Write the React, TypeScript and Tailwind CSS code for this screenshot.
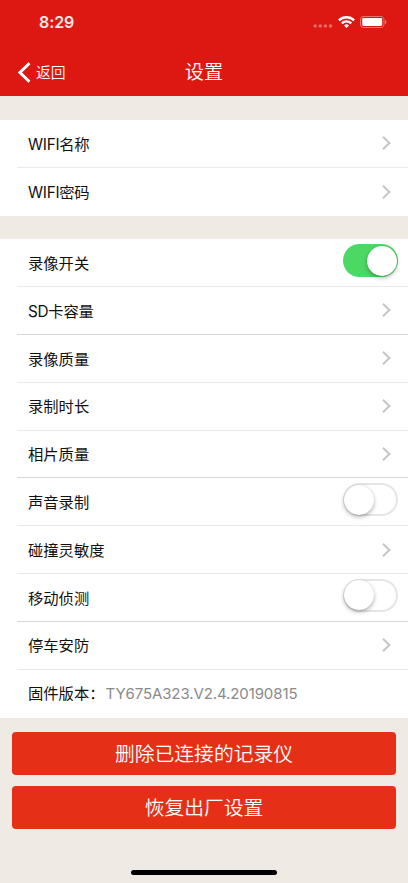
import type { ReactNode } from 'react';
import clsx from 'clsx';

type Item = {
  label: string;
  value?: string;
  toggle?: boolean;
  strong?: boolean;
};

const wifiItems: Item[] = [{ label: 'WIFI名称' }, { label: 'WIFI密码' }];

const deviceItems: Item[] = [
  { label: '录像开关', toggle: true },
  { label: 'SD卡容量', strong: true },
  { label: '录像质量' },
  { label: '录制时长' },
  { label: '相片质量', strong: true },
  { label: '声音录制', toggle: false },
  { label: '碰撞灵敏度' },
  { label: '移动侦测', toggle: false, strong: true },
  { label: '停车安防' },
  { label: '固件版本：', value: 'TY675A323.V2.4.20190815' },
];

function StatusBar() {
  return (
    <div className="flex h-[44px] items-center justify-between pl-[39px] pr-[21px]">
      <span className="text-[16px] leading-5 font-semibold tracking-[-0.1px] text-white/90">8:29</span>
      <div className="flex items-center">
        <svg width="20" height="4" viewBox="0 0 20 4" className="mt-[8px] mr-[5px]" fill="#fff" fillOpacity="0.35">
          <circle cx="2.2" cy="2" r="1.8" />
          <circle cx="7.3" cy="2" r="1.8" />
          <circle cx="12.4" cy="2" r="1.8" />
          <circle cx="17.5" cy="2" r="1.8" />
        </svg>
        <svg width="17" height="12" viewBox="0 0 17 12" className="mr-[5px]" fill="none" stroke="#fff" strokeWidth="2.3">
          <path d="M0.9 4.4a10.8 10.8 0 0 1 15.2 0" />
          <path d="M3.8 7.4a6.6 6.6 0 0 1 9.4 0" />
          <path d="M8.5 12 6 9.5a3.5 3.5 0 0 1 5 0z" fill="#fff" stroke="none" />
        </svg>
        <svg width="27" height="12" viewBox="0 0 27 12">
          <rect x="0.5" y="0.5" width="23.5" height="11" rx="3" fill="none" stroke="#fff" strokeOpacity="0.4" />
          <rect x="2.2" y="2.1" width="20" height="7.8" rx="1.4" fill="#fff" />
          <path d="M25.2 4a2.2 2.2 0 0 1 0 4z" fill="#fff" fillOpacity="0.45" />
        </svg>
      </div>
    </div>
  );
}

function Header() {
  return (
    <header className="h-[96px] bg-[#dd1812] text-white">
      <StatusBar />
      <div className="grid h-[52px] grid-cols-3 items-center pt-[4px]">
        <div className="flex items-center pl-[18px]">
          <svg width="13" height="21" viewBox="0 0 13 21" fill="none" stroke="#fff" strokeWidth="3">
            <path d="M11.4 1.2 2 10.5l9.4 9.3" />
          </svg>
          <span className="ml-[5px] pt-[1px] text-[14.8px] leading-5 font-[350]">返回</span>
        </div>
        <h1 className="text-center text-[19.2px] leading-6 font-[350]">设置</h1>
      </div>
    </header>
  );
}

function Chevron() {
  return (
    <svg width="9" height="14" viewBox="0 0 9 14" className="mr-[7px]" fill="none" stroke="#c5c5ca" strokeWidth="2">
      <path d="m1 0.8 6.4 6.2L1 13.2" />
    </svg>
  );
}

function Switch({ on }: { on: boolean }) {
  return (
    <div
      className={clsx(
        'mb-[4px] flex h-[33px] w-[55.5px] items-center rounded-full px-[1.5px]',
        on ? 'justify-end bg-[#4bd964]' : 'bg-white inset-ring-2 inset-ring-[#e5e5e5]'
      )}
    >
      <div className="size-[30px] shrink-0 rounded-full bg-white shadow-[0_2px_4px_rgba(0,0,0,0.3),0_0_1px_rgba(0,0,0,0.15)]" />
    </div>
  );
}

function Row({ item, last }: { item: Item; last: boolean }) {
  return (
    <div
      className={clsx(
        'ml-[17px] flex h-[47.83px] items-center justify-between pr-[10px] pl-[11px]',
        !last && 'border-b',
        item.strong ? 'border-[#d6d6d8]' : 'border-[#e9e9eb]'
      )}
    >
      <div
        className={clsx(
          'flex items-center text-[15.3px] leading-6 text-[#111]',
          !item.value && 'pt-[2.4px]',
          /^[A-Z]/.test(item.label) && 'tracking-[-0.25px]'
        )}
      >
        {item.label}
        {item.value && <span className="ml-[1px] text-[15px] tracking-[-0.1px] text-[#8a8a8a]">{item.value}</span>}
      </div>
      {item.toggle !== undefined ? <Switch on={item.toggle} /> : !item.value && <Chevron />}
    </div>
  );
}

function Section({ items }: { items: Item[] }) {
  return (
    <section className="bg-white">
      {items.map((item, i) => (
        <Row key={item.label} item={item} last={i === items.length - 1} />
      ))}
    </section>
  );
}

function ActionButton({ children }: { children: ReactNode }) {
  return (
    <button className="h-[43px] w-full rounded-[4px] bg-[#e53017] pt-[1px] text-[19.8px] leading-6 font-[350] text-white">
      {children}
    </button>
  );
}

export default function App() {
  return (
    <div className="flex h-[883px] w-[408px] flex-col overflow-hidden bg-[#efeae4] font-['Inter','Noto_Sans_CJK_SC',sans-serif]">
      <Header />
      <main className="flex flex-col gap-[23.7px] pt-[23.9px]">
        <Section items={wifiItems} />
        <Section items={deviceItems} />
      </main>
      <div className="flex flex-col gap-[11.5px] px-[12px] pt-[14.1px]">
        <ActionButton>删除已连接的记录仪</ActionButton>
        <ActionButton>恢复出厂设置</ActionButton>
      </div>
      <div className="mx-auto mt-auto mb-[8px] h-[5px] w-[146px] rounded-full bg-black" />
    </div>
  );
}
